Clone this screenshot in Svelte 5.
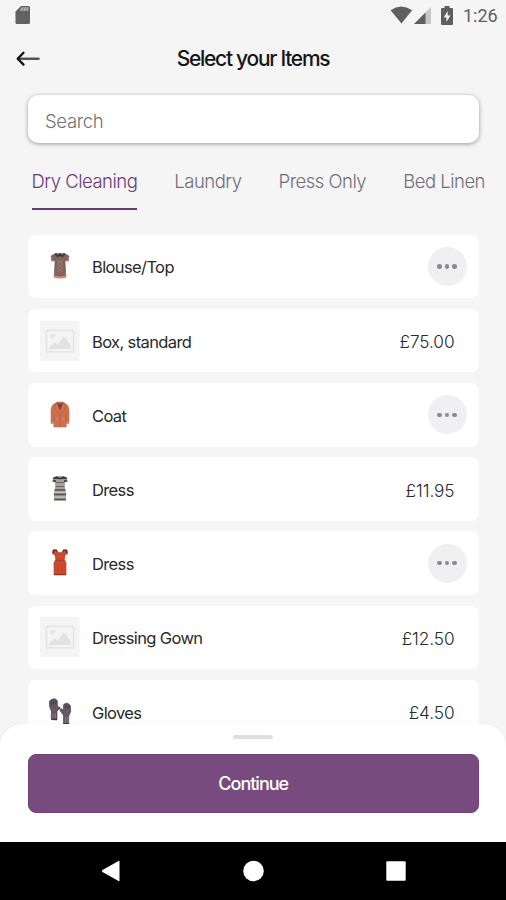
<script>
  const tabs = ['Dry Cleaning', 'Laundry', 'Press Only', 'Bed Linen'];
  const items = [
    { name: 'Blouse/Top', icon: 'blouse' },
    { name: 'Box, standard', icon: 'empty', price: '£75.00' },
    { name: 'Coat', icon: 'coat' },
    { name: 'Dress', icon: 'striped', price: '£11.95' },
    { name: 'Dress', icon: 'dress' },
    { name: 'Dressing Gown', icon: 'empty', price: '£12.50' },
    { name: 'Gloves', icon: 'gloves', price: '£4.50' }
  ];
  let active = $state(0);
</script>

{#snippet picture(kind)}
  <svg class="pic" width="40" height="40" viewBox="0 0 40 40" aria-hidden="true">
    {#if kind === 'empty'}
      <rect width="39.500" height="40" fill="#f4f4f4" />
      <rect x="6.5" y="9.3" width="27" height="21.6" rx="0.8" fill="none" stroke="#e5e5e6" stroke-width="1.7" />
      <circle cx="12.6" cy="15" r="2.6" fill="#e5e5e6" />
      <path d="M9 28v-2l5.500-4.500 3 2 5.500-7h2.500l5.500 8.500V28z" fill="#e2e2e3" />
    {:else if kind === 'blouse'}
      <path d="M15.500 7.500h9l4.500 2.500-1 5-3-.5.2 5 .6 11.500c-3 1.200-8.600 1.200-11.600 0l.6-11.500.2-5-3 .5-1-5z" fill="#80655c" stroke="#6b554f" stroke-width=".6" />
      <path d="M11.500 11l.3 3.500 2 .4M28.500 11l-.3 3.500-2 .4" fill="none" stroke="#b9766a" stroke-width="1.300" />
      <path d="M14.500 30.300c3 1.200 8 1.200 11 0" fill="none" stroke="#e08770" stroke-width="1.900" />
      <path d="M15.500 7.500c1 4 3 3 4.500 1 1.500 2 3.500 3 4.500-1" fill="none" stroke="#353237" stroke-width="1.500" />
      <path d="M17 14l6 4-6 4 6 4M23 14l-6 4 6 4-6 4" fill="none" stroke="#a77c68" stroke-width=".8" />
    {:else if kind === 'coat'}
      <path d="M17 7h6l4.500 3 1.500 4v14.500h-2.800V32H13.800v-3.500H11V14l1.500-4z" fill="#cf704e" stroke="#b8755c" stroke-width=".6" />
      <path d="M16.500 7.500c2 1.500 5 1.500 7 0l-3.500 8z" fill="#78433a" />
      <path d="M15.500 9l-1 5 5.500 5.500 5.500-5.500-1-5M20 19v12.500M14 18v10M26 18v10" fill="none" stroke="#ab5b40" stroke-width=".7" />
      <path d="M16.500 24H18m4 0h1.500" stroke="#e69a76" />
      <path d="M11 27.800h2.500m13 0H29" stroke="#d5a37e" />
    {:else if kind === 'striped'}
      <path d="M16 7h8l3 2 .5 3.500-2.500.5-.3 5 1.500 7-.5 6.500H14.300l-.5-6.500 1.500-7-.3-5-2.500-.5.500-3.500z" fill="#a8a39a" />
      <path d="M15.500 8c2.500 2 6.500 2 9 0M13 9.500l3-.6m11 .6-3-.6M12.800 12h3.200m8 0h3.200" fill="none" stroke="#303239" stroke-width="1.700" />
      <path d="M15.500 13.500h9M15.500 17.500h9" stroke="#66666a" stroke-width="1.100" />
      <path d="M14.500 21h11M14 25.500h12M14 30.500h12" stroke="#4c4d57" stroke-width="1.700" />
      <path d="M15 23.200h10M14.500 28h11" stroke="#d0cbbf" />
    {:else if kind === 'dress'}
      <path d="M13 7h3.500c1 3.500 6 3.500 7 0H27l.7 3.500-2.700 1.500-.7 4.500 1.700 3V32H14V19.500l1.700-3L15 12l-2.700-1.500z" fill="#ce4a2e" stroke="#a83d28" stroke-width=".6" />
      <path d="M13 10.200l.7-3h2.500l1 1.500m9.800 1.500l-.7-3h-2.500l-1 1.500" fill="none" stroke="#54302c" stroke-width="1.200" />
      <path d="M15.800 17.200h8.400" fill="none" stroke="#94382a" stroke-width=".8" />
      <path d="M18 20v11m4-11v11" stroke="#b64029" stroke-width=".7" />
      <path d="M14.500 31.500h11" stroke="#8d3427" />
    {:else}
      <path d="M11.300 27.500V19l-1.800-4.500V9l2-1.500 2-.7 2 .2 1.800 1.500.2 6.500h2.200l.3 1.500-3 2.500v9z" fill="#665868" stroke="#393642" stroke-width=".6" />
      <path d="M23.500 32v-8.500l-3.500-5 .7-2 2.500 1.500.5-5.500 2-1.300 2.500.3 2 2 .5 6-2 4.500v8z" fill="#665868" stroke="#393642" stroke-width=".6" />
      <path d="M11.200 8v5m2.300-5v4.500m2.200-4v4M25.500 12.500v4m2.300-4v4m2-3v3" stroke="#373642" stroke-width=".8" />
      <path d="M13 22v4.500m2.500-4.500v4.500M25.500 25v6m2.500-6v6" stroke="#ac7170" stroke-width=".9" />
      <path d="M11.500 27.200H17M23.700 31.800h5.500" stroke="#4a3137" stroke-width="1.200" />
    {/if}
  </svg>
{/snippet}

<div class="screen">
  <div class="status">
    <svg class="sd" width="16" height="20" viewBox="0 0 16 20">
      <path d="M6 1h7.500Q15 1 15 2.500v15q0 1.500-1.500 1.500h-12Q.5 19 .5 17.500V6.500z" fill="#626262" />
      <path d="M5 4.500l2-2.500h6.500v4H5z" fill="#8d8d8d" />
      <path d="M7 2.500v3m2.700-3v3m2.700-3v3" stroke="#c8c8c8" stroke-width=".9" />
    </svg>
    <div class="indicators">
      <svg width="23" height="18" viewBox="0 0 23 18"><path d="M.6 4.200Q11 -3 22.200 4.200L11.400 17.600z" fill="#5f5f5f" /></svg>
      <svg class="signal" width="17" height="17" viewBox="0 0 17 17"><path d="M17 0v17H0z" fill="#c6c6c6" /><path d="M11.500 5.500V17H0z" fill="#5f5f5f" /></svg>
      <svg class="battery" width="12" height="19" viewBox="0 0 12 19"><path d="M3.500 0h5v2H11q1 0 1 1v15q0 1-1 1H1q-1 0-1-1V3q0-1 1-1h2.500z" fill="#5f5f5f" /><path d="M6.700 5L2.800 11.500h2.700V16l3.900-6.500H6.700z" fill="#f5f5f5" /></svg>
      <span class="clock">1:26</span>
    </div>
  </div>

  <header>
    <svg class="back" width="26" height="18" viewBox="0 0 26 18" fill="none" stroke-linecap="round" stroke-linejoin="round">
      <path d="M3 8.800h20.500" stroke="#555" stroke-width="2.500" /><path d="M8.500 2.800L2.700 8.800l5.800 5.800" stroke="#111" stroke-width="2.300" />
    </svg>
    <h1>Select your Items</h1>
  </header>

  <div class="search">Search</div>

  <nav class="tabs">
    {#each tabs as tab, i}
      <button class="tab" class:active={i === active} onclick={() => (active = i)}>{tab}</button>
    {/each}
  </nav>

  <main>
    {#each items as item}
      <div class="card">
        {@render picture(item.icon)}
        <span class="name">{item.name}</span>
        {#if item.price}
          <span class="price">{item.price}</span>
        {:else}
          <span class="more"><i></i><i></i><i></i></span>
        {/if}
      </div>
    {/each}
  </main>

  <section class="sheet">
    <div class="handle"></div>
    <button class="continue">Continue</button>
  </section>

  <footer>
    <svg width="20" height="22" viewBox="0 0 20 22"><path d="M1.500 10L17.500 1q1-.5 1 .5v19q0 1-1 .5L1.500 12q-1.500-1 0-2z" fill="#fff" /></svg>
    <svg width="22" height="22" viewBox="0 0 22 22"><circle cx="10.500" cy="11" r="10.300" fill="#fff" /></svg>
    <svg width="20" height="20" viewBox="0 0 20 20"><rect x=".3" y=".3" width="19.400" height="19.400" rx="1" fill="#fff" /></svg>
  </footer>
</div>

<style>
  .screen {
    width: 506px;
    height: 900px;
    overflow: hidden;
    display: flex;
    flex-direction: column;
    background: #f5f5f5;
    font-family: Inter, 'Liberation Sans', sans-serif;
    color: #2a2a2a;
  }
  .screen * { box-sizing: border-box; }
  button { font: inherit; border: 0; padding: 0; margin: 0; background: none; }
  svg { display: block; flex: none; }

  .status {
    height: 32px;
    flex: none;
    display: flex;
    justify-content: space-between;
    align-items: flex-start;
    padding: 5px 9px 0 15px;
  }
  .indicators { display: flex; align-items: flex-start; padding-top: 1px; }
  .signal { margin: 1px 0 0 1px; }
  .battery { margin-left: 10px; }
  .clock { margin-left: 10px; width: 34px; font: 18px/20px Roboto, sans-serif; color: #606060; white-space: nowrap; }

  header { height: 54px; flex: none; display: flex; align-items: center; padding: 0 15px; }
  h1 {
    margin: 0 26px 0 0;
    flex: 1;
    text-align: center;
    font-size: 21px;
    line-height: 26px;
    font-weight: 500;
    letter-spacing: -1.280px;
    color: #161616;
  }

  .search {
    flex: none;
    height: 48px;
    margin: 9px 27px 0 28px;
    padding-left: 17px;
    border-radius: 10px;
    background: #fff;
    box-shadow: 0 1px 4px rgba(0, 0, 0, 0.38);
    font-size: 18.500px;
    line-height: 52px;
    font-weight: 300;
    letter-spacing: -0.350px;
    color: #747474;
  }

  .tabs { flex: none; height: 67px; padding-left: 31.500px; display: flex; gap: 37px; overflow: hidden; }
  .tab {
    flex: none;
    height: 67px;
    padding: 38px 0 28px;
    line-height: 1px;
    font-size: 18.500px;
    font-weight: 300;
    letter-spacing: -0.500px;
    color: #716e76;
    white-space: nowrap;
  }
  .tab.active { color: #6b3a76; border-bottom: 2px solid #6b3a76; padding-bottom: 26px; }

  main { flex: 1; min-height: 0; overflow: hidden; padding: 24.700px 27.500px 0 28px; }
  .card {
    height: 63.500px;
    margin-bottom: 10.700px;
    display: flex;
    align-items: center;
    padding: 0 12px;
    border-radius: 8px;
    background: #fff;
  }
  .name { flex: 1; margin: 2px 0 0 12px; font-size: 16.500px; letter-spacing: -0.620px; }
  .price { margin: 2px 12px 0 0; font-size: 17.300px; letter-spacing: -0.100px; font-weight: 350; }
  .more { width: 39px; height: 39px; border-radius: 50%; background: #f0f0f2; display: flex; align-items: center; justify-content: center; gap: 3px; }
  .more i { width: 4.500px; height: 4.500px; border-radius: 50%; background: #8b8b8f; }

  .sheet {
    flex: none;
    height: 118px;
    margin-top: -1px;
    padding: 11px 27.500px 0 28px;
    position: relative;
    border-radius: 22px 22px 0 0;
    background: #fff;
    box-shadow: 0 0 2px rgba(0, 0, 0, 0.1);
  }
  .handle { width: 40px; height: 4px; margin: 0 auto; border-radius: 2px; background: #dedede; }
  .continue {
    display: block;
    width: 100%;
    height: 59px;
    margin-top: 15px;
    border-radius: 8px;
    background: #774b7d;
    border: 1px solid #704276;
    color: #fff;
    font-size: 18px;
    line-height: 58px;
    font-weight: 500;
    letter-spacing: -0.980px;
  }
  footer {
    flex: none;
    height: 58px;
    padding: 0 100px 0 101px;
    display: flex;
    align-items: center;
    justify-content: space-between;
    background: #000;
  }
</style>
